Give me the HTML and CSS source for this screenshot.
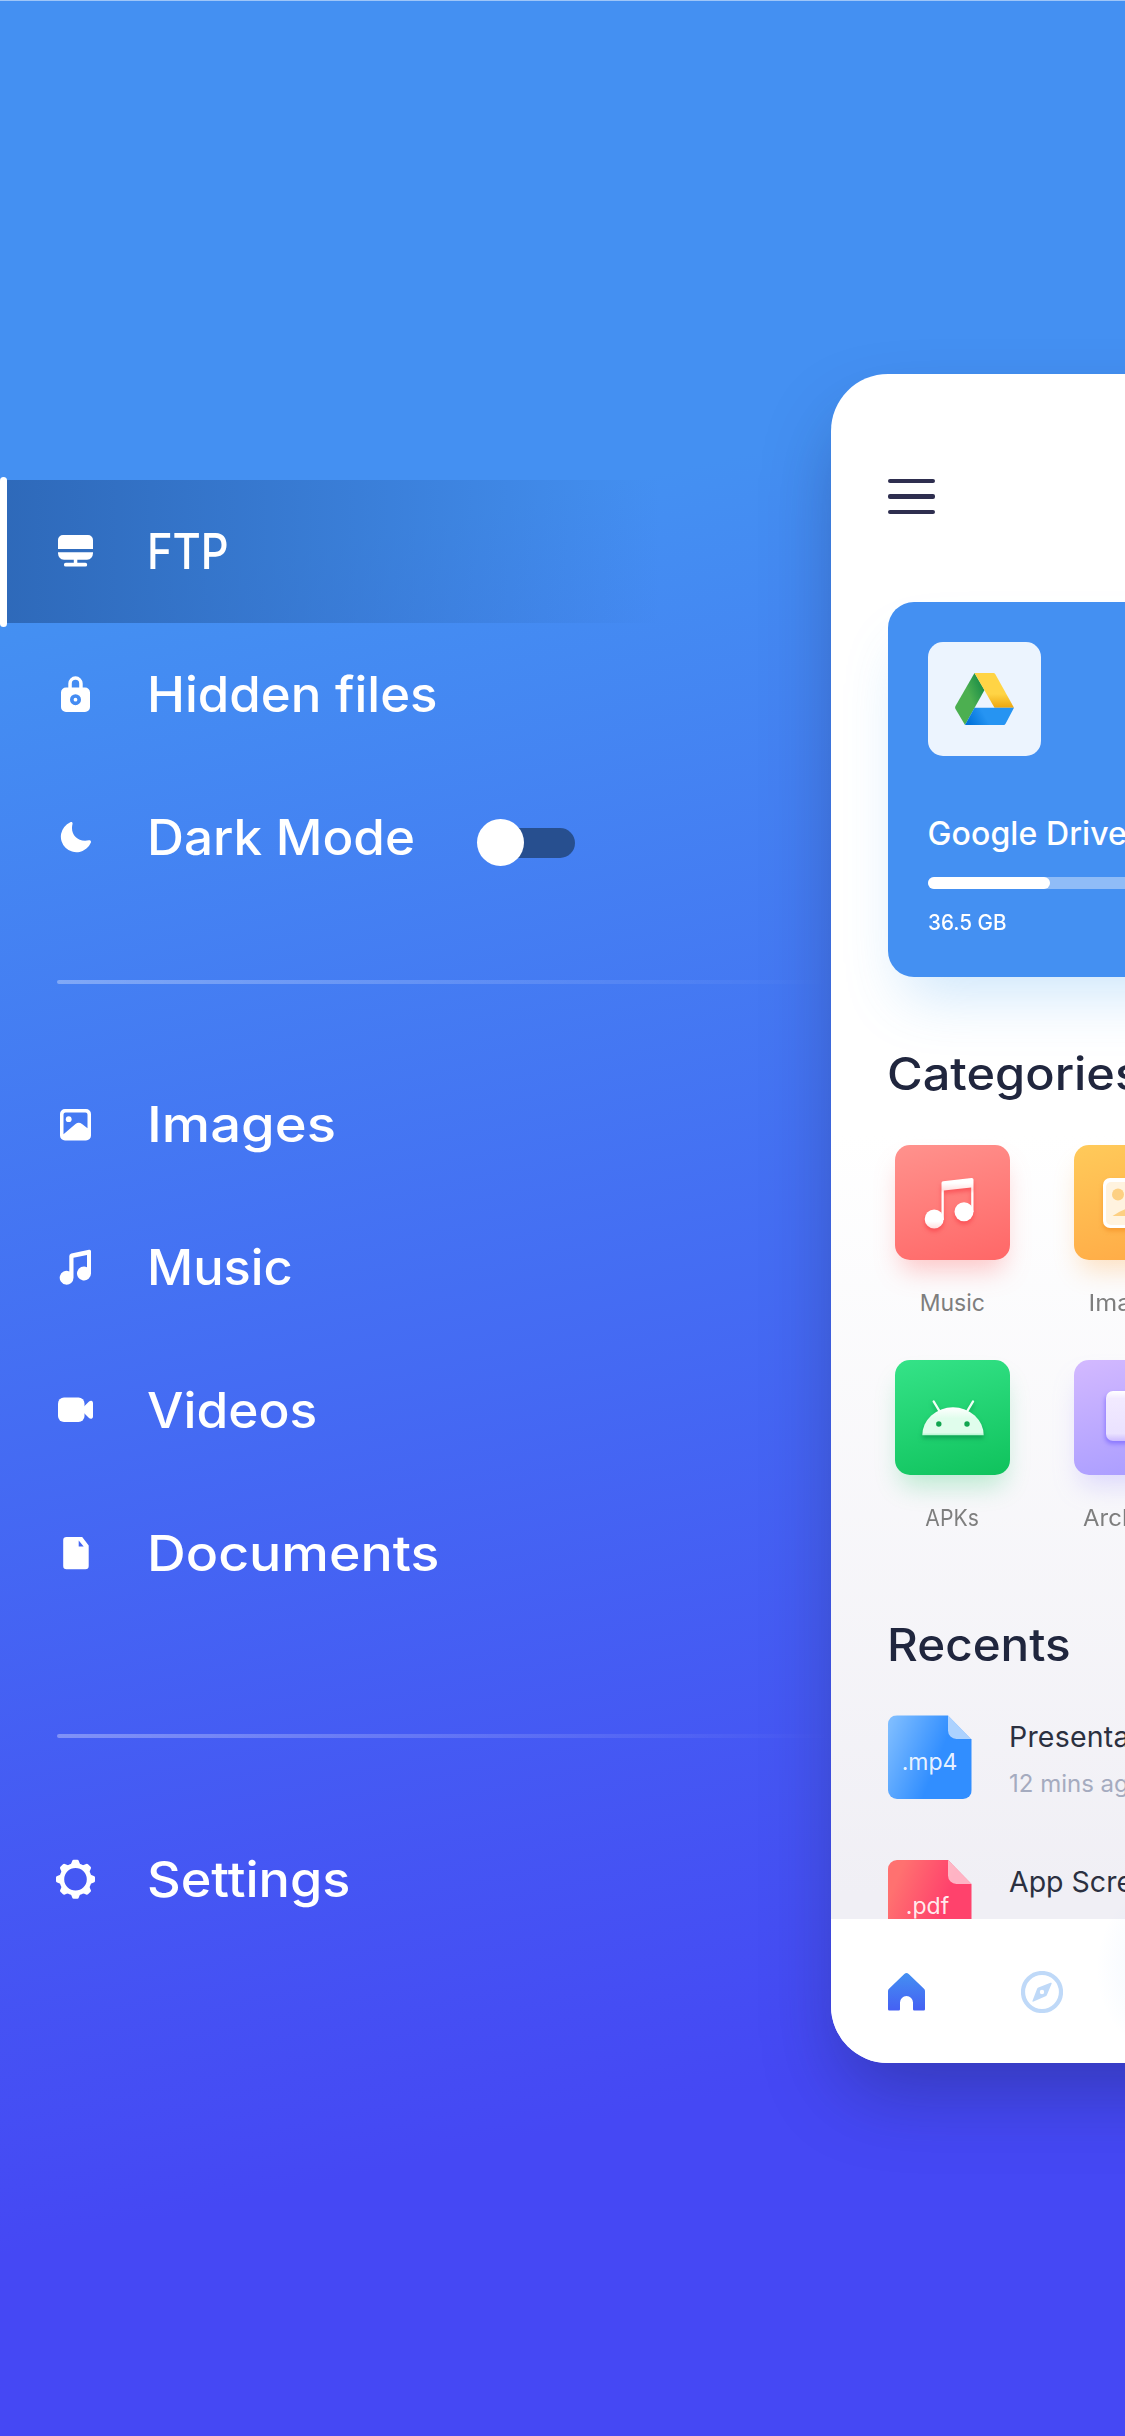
FILE: index.html
```html
<!DOCTYPE html>
<html lang="en">
<head>
<meta charset="utf-8">
<title>File manager</title>
<link rel="stylesheet" href="styles.css">
</head>
<body>
<div class="screen">
  <nav class="menu">
    <a class="item active"><svg class="icon" viewBox="0 0 48 48"><path d="M7 21v-9a5 5 0 0 1 5-5h25a5 5 0 0 1 5 5v9zM7 24.200h35v1a7 7 0 0 1-6 6.600H26.300v3h8a1.900 1.900 0 0 1 0 3.800h-19.500a1.900 1.900 0 0 1 0-3.800h8v-3H13a7 7 0 0 1-6-6.600z"/></svg><span class="label ftp">FTP</span></a>
    <a class="item"><svg class="icon" viewBox="0 0 48 48"><path fill-rule="evenodd" d="M17.300 16.500v-4a7.200 7.200 0 0 1 14.400 0v4h2.300a5 5 0 0 1 5 5V36a5 5 0 0 1-5 5H15a5 5 0 0 1-5-5V21.500a5 5 0 0 1 5-5zm3.500 0h7.400v-4a3.700 3.700 0 0 0-7.400 0zm3.700 6.700a5.500 5.500 0 1 0 0 11 5.500 5.500 0 0 0 0-11zm0 3.600a1.900 1.900 0 1 1 0 3.800 1.900 1.900 0 0 1 0-3.800z"/></svg><span class="label hidden-files">Hidden files</span></a>
    <a class="item"><svg class="icon" viewBox="0 0 48 48"><path d="M19.300 8.300c1.500-.7 2.600.3 2.200 1.700-2.600 10.500 5 18.500 16.300 16.300 1.600-.3 2.500.7 2.100 2.200A15.600 15.600 0 1 1 19.300 8.300z"/></svg><span class="label dark">Dark Mode</span><span class="toggle"><span class="knob"></span></span></a>
    <hr class="rule rule-first">
    <a class="item"><svg class="icon" viewBox="0 0 48 48"><path fill-rule="evenodd" d="M14 8h21a5 5 0 0 1 5 5v21.500a5 5 0 0 1-5 5H14a5 5 0 0 1-5-5V13a5 5 0 0 1 5-5zm.5 3.500a2 2 0 0 0-2 2v19.700l12-10.200q3.200-2.600 6.500 0l5.500 4.200V13.500a2 2 0 0 0-2-2z"/><circle cx="17.700" cy="18.200" r="2.900"/></svg><span class="label images">Images</span></a>
    <a class="item"><svg class="icon" viewBox="0 0 48 48"><path fill-rule="evenodd" d="M18.300 12q0-2 2-2.500L38 5.700q2-.4 2 1.600V29.500a7 7 0 1 1-4-6.300V11L22.500 13.800V33.700a6.900 6.900 0 1 1-4.200-6.300z"/></svg><span class="label music">Music</span></a>
    <a class="item"><svg class="icon" viewBox="0 0 48 48"><rect x="7" y="10.500" width="26.500" height="24.500" rx="6"/><path d="M32 20.500l5.500-5.500q1.500-1.500 3-1.300t1.500 2.300V29.500q0 2-1.500 2.300t-3-1.300L32 25z"/></svg><span class="label videos">Videos</span></a>
    <a class="item"><svg class="icon" viewBox="0 0 48 48"><path fill-rule="evenodd" d="M15.500 7h15.700l6.500 8.500V36a3.300 3.300 0 0 1-3.300 3.300H15.500a3.300 3.300 0 0 1-3.300-3.300V10.300A3.300 3.300 0 0 1 15.500 7zM27.700 10.500v6h5z"/></svg><span class="label documents">Documents</span></a>
    <hr class="rule rule-second">
    <a class="item"><svg class="icon" viewBox="0 0 48 48"><circle cx="24.500" cy="23.300" r="13.700" fill="none" stroke="#fff" stroke-width="4.800"/><g transform="translate(24.500 23.300)"><path id="tooth" d="M-5-14l1.700-4.300q.3-1.200 1.500-1.200h3.600q1.200 0 1.500 1.200L5-14z"/><use href="#tooth" transform="rotate(45)"/><use href="#tooth" transform="rotate(90)"/><use href="#tooth" transform="rotate(135)"/><use href="#tooth" transform="rotate(180)"/><use href="#tooth" transform="rotate(225)"/><use href="#tooth" transform="rotate(270)"/><use href="#tooth" transform="rotate(315)"/></g></svg><span class="label settings">Settings</span></a>
  </nav>

  <main class="phone">
    <div class="content">
      <div class="burger"><i></i><i></i><i></i></div>
      <section class="drive">
        <div class="drive-tile">
          <svg width="59" height="52" viewBox="0 0 59 52">
            <defs>
              <linearGradient id="g-green" x1="1" y1="0.100" x2="0.500" y2="0.450"><stop stop-color="#0f8545"/><stop offset="1" stop-color="#4caf50"/></linearGradient>
              <linearGradient id="g-yellow" x1="0" y1="0" x2="0" y2="1"><stop offset=".6" stop-color="#ffd445"/><stop offset="1" stop-color="#eda60e"/></linearGradient>
              <linearGradient id="g-blue" x1="0" y1="0.500" x2="1" y2="0.300"><stop stop-color="#0273da"/><stop offset=".4" stop-color="#2694f2"/></linearGradient>
            </defs>
            <path d="M19.500 0L29.500 17 10 52 .5 36q-.8-1.500 0-3z" fill="url(#g-green)"/>
            <path d="M19.500 0H38.500q1 0 1.700 1L59 34.800H39.500z" fill="url(#g-yellow)"/>
            <path d="M19.500 34.800H59L50.700 50.500Q50 52 48.500 52H10z" fill="url(#g-blue)"/>
          </svg>
        </div>
        <div class="drive-name">Google Drive</div>
        <div class="meter"><div class="meter-fill"></div></div>
        <div class="drive-used">36.5 GB</div>
      </section>

      <h2 class="heading categories">Categories</h2>
      <div class="grid">
        <div class="category">
          <div class="tile tile-red"><svg width="116" height="116" viewBox="0 0 116 116">
            <defs><linearGradient id="g-note" x1="0" y1="33" x2="0" y2="84" gradientUnits="userSpaceOnUse"><stop offset=".1" stop-color="#fff"/><stop offset=".23" stop-color="#ffe2e2"/><stop offset=".3" stop-color="#fff"/><stop offset=".85" stop-color="#fff"/><stop offset="1" stop-color="#ffdcdc"/></linearGradient></defs>
            <g class="glyph-red" fill="url(#g-note)"><path fill-rule="evenodd" d="M46.500 38q0-1.600 1.600-1.800L76.500 33q2-.2 2 1.600V67h-2.300V42.500L48.800 45.500V75h-2.300z"/><circle cx="39.200" cy="74" r="9.500"/><circle cx="69" cy="66.700" r="9.500"/></g></svg></div>
          <span class="caption cap-music">Music</span>
        </div>
        <div class="category">
          <div class="tile tile-orange"><svg width="116" height="116" viewBox="0 0 116 116">
            <g class="glyph-orange"><rect x="29" y="33" width="58" height="50" rx="7" fill="#fff"/><rect x="32" y="37" width="52" height="43" rx="5" fill="#fff3df"/></g>
            <circle cx="44" cy="49.500" r="6" fill="#fdd083"/><path d="M38.500 71Q50 63 60 62l18 9z" fill="#fdd083"/></svg></div>
          <span class="caption cap-images">Images</span>
        </div>
        <div class="category">
          <div class="tile tile-green"><svg width="116" height="116" viewBox="0 0 116 116">
            <defs><linearGradient id="g-robot" x1="0" y1="0" x2="0" y2="1"><stop stop-color="#fff"/><stop offset=".4" stop-color="#e0fdec"/><stop offset=".9" stop-color="#e0fdec"/><stop offset="1" stop-color="#b4f5d0"/></linearGradient></defs>
            <g class="glyph-green"><path d="M38.700 41.500l6 10M78 41.500l-6 10" stroke="#effff5" stroke-width="2.400" stroke-linecap="round"/><path d="M27.300 75.300a30.700 28 0 0 1 61.400 0z" fill="url(#g-robot)"/></g>
            <circle cx="43.800" cy="64" r="2.700" fill="#12a550"/><circle cx="72" cy="64" r="2.700" fill="#12a550"/></svg></div>
          <span class="caption cap-apks">APKs</span>
        </div>
        <div class="category">
          <div class="tile tile-purple"><svg width="116" height="116" viewBox="0 0 116 116">
            <defs><linearGradient id="g-box" x1="0" y1="0" x2="0" y2="1"><stop stop-color="#fff"/><stop offset=".15" stop-color="#f2eaff"/><stop offset=".85" stop-color="#eae2ff"/><stop offset="1" stop-color="#cdbcff"/></linearGradient></defs>
            <rect class="glyph-purple" x="32" y="31" width="52" height="50" rx="7" fill="url(#g-box)"/></svg></div>
          <span class="caption cap-archives">Archives</span>
        </div>
      </div>

      <h2 class="heading recents">Recents</h2>
      <div class="file">
        <div class="thumb mp4"><svg class="fold" viewBox="0 0 24 24"><path d="M0 0l24 24H8.500A8.500 8.500 0 0 1 0 15.500z"/></svg><span class="ext ext-mp4">.mp4</span></div>
        <div class="file-text"><div class="file-name presentation">Presentation</div><div class="file-time">12 mins ago</div></div>
      </div>
      <div class="file">
        <div class="thumb pdf"><svg class="fold" viewBox="0 0 24 24"><path d="M0 0l24 24H8.500A8.500 8.500 0 0 1 0 15.500z"/></svg><span class="ext ext-pdf">.pdf</span></div>
        <div class="file-text"><div class="file-name app">App Screens</div></div>
      </div>
    </div>
    <footer class="tabs">
      <svg class="home" viewBox="0 0 37 38"><defs><linearGradient id="g-home" x1="0" y1="0" x2="0" y2="1"><stop stop-color="#4490f2"/><stop offset="1" stop-color="#4560f3"/></linearGradient></defs><path fill="url(#g-home)" d="M16.300.9q2.200-1.800 4.400 0L36 15.800q1 1 1 2.200V36.300q0 1.200-1.200 1.200H26.200q-1.200 0-1.200-1.200V29.500a6.500 6.500 0 0 0-13 0v6.800q0 1.200-1.200 1.200H1.200Q0 37.500 0 36.300V18q0-1.200 1-2.200z"/></svg>
      <svg class="compass" viewBox="0 0 42 42"><circle cx="21" cy="21" r="19" fill="none" stroke="#bfd9f8" stroke-width="4.200"/><path fill-rule="evenodd" fill="#bfd9f8" d="M29.500 11.800q1.700-.5 1 1.100L26 23.800q-.4 1-1.400 1.500L12.600 30.600q-1.700.5-1-1.100L16 17.900q.4-.9 1.400-1.400zM21 18.800a2.200 2.200 0 1 0 0 4.400 2.200 2.200 0 0 0 0-4.400z"/></svg>
      <span class="glow"></span>
    </footer>
  </main>
</div>
</body>
</html>
```
FILE: styles.css
```css
* { box-sizing: border-box; }

body {
  margin: 0;
  overflow: hidden;
  font-family: Inter, "Liberation Sans", sans-serif;
}

.screen {
  display: grid;
  grid-template-columns: 831px 294px;
  align-items: start;
  width: 1125px;
  height: 2436px;
  overflow: hidden;
  border-top: 1px solid #9fc6f8;
  background: linear-gradient(167.5deg, #4490f2 23%, #4548f4 84%);
}

/* side menu */
.menu { padding-top: 479px; }

.item {
  display: flex;
  align-items: center;
  height: 143.3px;
  padding-left: 51px;
  color: #fff;
}

.active {
  position: relative;
  background: linear-gradient(90deg, #2e69b9 0, rgba(46, 105, 185, 0) 660px);
}

.active::before {
  content: "";
  position: absolute;
  left: 0;
  top: -3px;
  width: 7px;
  height: 150px;
  border-radius: 4px;
  background: #fff;
}

.icon { width: 48px; height: 48px; fill: #fff; }

.label {
  margin-left: 48px;
  font-size: 49px;
  font-weight: 500;
  line-height: 60px;
  white-space: nowrap;
  transform-origin: 0 50%;
}
.ftp { transform: scaleX(.885); }
.hidden-files { transform: scaleX(1.040); }
.dark { transform: scaleX(1.044); }
.images { transform: scaleX(1.110); }
.music { transform: scaleX(1.032); }
.videos { transform: scaleX(1.050); }
.documents { transform: scaleX(1.095); }
.settings { transform: scaleX(1.065); }

.toggle {
  display: flex;
  align-items: center;
  width: 97px;
  height: 30px;
  margin: 9px 0 0 74.500px;
  border-radius: 15px;
  background: #274f8f;
}

.knob { width: 47px; height: 47px; margin-left: -1px; border-radius: 50%; background: #fff; }

.rule {
  height: 4px;
  margin: 70px 0 0 57px;
  border: 0;
  border-radius: 2px;
  background: linear-gradient(90deg, rgba(255, 255, 255, .32), rgba(255, 255, 255, 0));
}
.rule-first { margin-bottom: 69px; }
.rule-second { margin-top: 108px; margin-bottom: 70px; }

/* app preview */
.phone {
  display: flex;
  flex-direction: column;
  width: 640px;
  height: 1689px;
  margin-top: 373px;
  overflow: hidden;
  border-radius: 57px;
  background: linear-gradient(180deg, #fff 45%, #f0eff5 90%);
  box-shadow: 0 38px 76px -10px rgba(24, 34, 80, .36);
}

.content { height: 1545px; padding: 105px 0 0 56.500px; overflow: hidden; }

.burger { display: flex; flex-direction: column; gap: 11px; width: 47.500px; }
.burger i { height: 4.300px; border-radius: 2px; background: #2e2e4f; }

.drive {
  width: 500px;
  height: 375px;
  margin-top: 88.500px;
  padding: 40px;
  border-radius: 26px;
  background: #4490f2;
  box-shadow: 0 34px 60px -18px rgba(68, 160, 242, .28);
  color: #fff;
}
.drive-tile {
  display: grid;
  place-items: center;
  width: 113.500px;
  height: 113.500px;
  border-radius: 15px;
  background: #ecf4fe;
}
.drive-name { margin-top: 58px; font-size: 32px; font-weight: 500; line-height: 40px; letter-spacing: .1px; white-space: nowrap; }
.meter { height: 12.500px; margin-top: 23px; border-radius: 7px; background: #8fbcf7; }
.meter-fill { width: 122px; height: 100%; border-radius: 7px; background: #fff; }
.drive-used { margin-top: 20px; font-size: 21.500px; font-weight: 500; line-height: 26px; transform: scaleX(.96); transform-origin: 0 50%; }

.heading { margin: 0 0 0 -1px; font-size: 45px; font-weight: 500; line-height: 60px; color: #20263e; white-space: nowrap; transform-origin: 0 50%; }
.categories { margin-top: 66.500px; transform: scaleX(1.082); }
.recents { margin-top: 40px; transform: scaleX(1.058); }

.grid {
  display: grid;
  grid-template-columns: 115.500px 115.500px;
  column-gap: 64px;
  margin: 41px 0 0 7px;
}
.category { display: flex; flex-direction: column; align-items: center; height: 215px; }
.tile { width: 115.500px; height: 115.500px; border-radius: 15px; }
.tile svg { display: block; }
.tile-red { background: linear-gradient(165deg, #ff928d, #ff6767); box-shadow: 0 16px 26px -6px rgba(255, 103, 103, .36); }
.tile-orange { background: linear-gradient(165deg, #ffca5a, #ffa945); box-shadow: 0 16px 26px -6px rgba(255, 169, 69, .32); }
.tile-green { background: linear-gradient(165deg, #35e388, #0fc25c); box-shadow: 0 16px 26px -6px rgba(15, 194, 92, .28); }
.tile-purple { background: linear-gradient(165deg, #d3b9ff, #a79bff); box-shadow: 0 16px 26px -6px rgba(167, 155, 255, .34); }
.glyph-red { filter: drop-shadow(0 3px 2px rgba(245, 50, 60, .55)); }
.glyph-orange { filter: drop-shadow(0 3px 2px rgba(240, 130, 20, .5)); }
.glyph-green { filter: drop-shadow(0 3px 2px rgba(0, 120, 60, .5)); }
.glyph-purple { filter: drop-shadow(-1px 3px 2px rgba(110, 90, 255, .6)); }
.caption { margin-top: 28px; font-size: 23px; line-height: 30px; color: #7e7e7e; white-space: nowrap; }
.cap-images { transform: scaleX(1.090); }
.cap-apks { transform: scaleX(.92); }
.cap-archives { transform: scaleX(1.040); }

.file { display: flex; height: 144.500px; }
.recents + .file { margin-top: 40.500px; }
.thumb { position: relative; width: 84px; height: 84px; clip-path: polygon(0 0, 60.500px 0, 100% 24px, 100% 100%, 0 100%); border-radius: 9px 0 9px 9px; text-align: center; }
.mp4 { background: linear-gradient(112deg, #7dbcff 5%, #318eff 58%); }
.pdf { background: linear-gradient(112deg, #ff7170 14%, #ff426c 62%); }
.fold { position: absolute; right: 0; top: 0; width: 24px; height: 24px; fill: rgba(255, 255, 255, .6); }
.ext { display: block; margin-top: 31.500px; font-size: 23px; line-height: 30px; color: rgba(255, 255, 255, .9); }
.ext-pdf { padding-right: 4px; }
.file-text { margin-left: 37.500px; white-space: nowrap; }
.file-name { margin-top: 4px; font-size: 28.500px; line-height: 36px; color: #2b3040; }
.presentation { letter-spacing: .2px; }
.file-time { margin-top: 14px; font-size: 24px; line-height: 30px; color: #a5abbf; }

.tabs { position: relative; display: flex; align-items: flex-start; height: 144px; padding: 52px 0 0 57px; background: #fff; }
.home { width: 37px; height: 38px; margin-top: 2px; }
.compass { width: 42px; height: 42px; margin-left: 96px; }
.glow { position: absolute; left: 264px; top: -50px; width: 200px; height: 200px; background: radial-gradient(circle, rgba(68, 144, 242, .12), rgba(68, 144, 242, 0) 70%); }
```
